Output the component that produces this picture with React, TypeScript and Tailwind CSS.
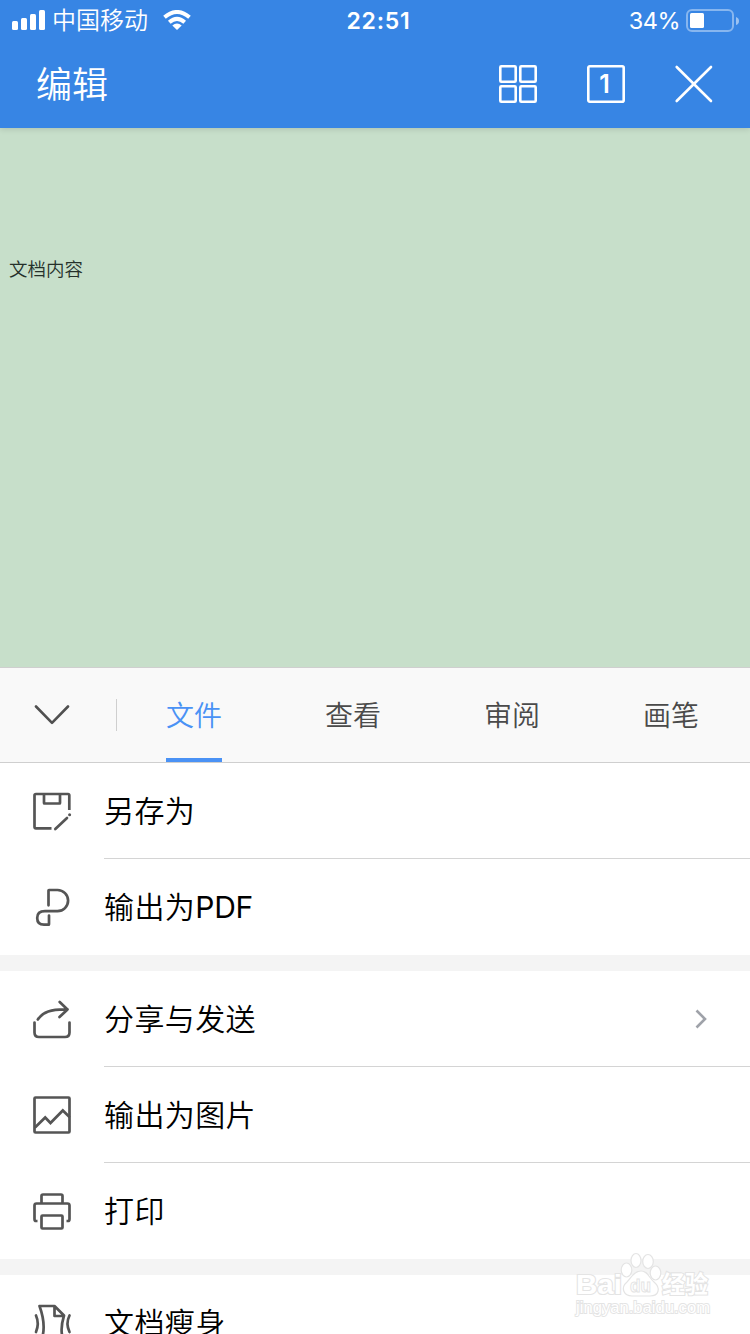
import type { ReactNode } from "react";

const cjk = "font-['Inter','Noto_Sans_CJK_SC',sans-serif]";

function Icon({ children }: { children: ReactNode }) {
  return (
    <svg
      width="40"
      height="40"
      viewBox="0 0 40 40"
      fill="none"
      stroke="#555"
      strokeWidth="2.7"
      strokeLinecap="round"
      strokeLinejoin="round"
      className="shrink-0"
    >
      {children}
    </svg>
  );
}

const SaveAs = () => (
  <Icon>
    <path d="M37.300 19V4.300Q37.300 3 36 3H4Q2.500 3 2.500 4.500V35.700Q2.500 37.300 4 37.300H19.500M12 3V12Q12 12.500 12.500 12.500H27.500Q28 12.500 28 12V3" strokeLinecap="butt" />
    <path d="M23.300 38L35 27" />
    <path d="M37.600 23.700V23.700" strokeWidth="3" />
  </Icon>
);

const Pdf = () => (
  <Icon>
    <path d="M16.500 18.300V3.500Q16.500 3 17 3H25.500A10.300 10.300 0 0 1 25.500 24.200H13C7.500 24.200 5.200 26.500 5.200 31C5.200 35.500 7.500 37.700 12 37.700H16.500Q17 37.700 17 37.200V28.500" />
  </Icon>
);

const Share = () => (
  <Icon>
    <path d="M2.500 23.500V33.500Q2.500 38 7 38H33Q37.500 38 37.500 33.500V23.500" />
    <path d="M5.800 20.500C11 13 18.500 10 35.500 10.400M27.700 3L35.500 10.400L27.500 18" />
  </Icon>
);

const Picture = () => (
  <Icon>
    <rect x="2.500" y="2.500" width="35" height="35" rx="1" />
    <path d="M3.500 32L13.200 22.500L18.500 28L30.800 15.500L37 21.500" strokeLinejoin="miter" />
  </Icon>
);

const Print = () => (
  <Icon>
    <path d="M9.500 12V5Q9.500 3.500 11 3.500H29Q30.500 3.500 30.500 5V12" strokeLinecap="butt" />
    <path d="M5.500 30H4Q2.500 30 2.500 28V14.500Q2.500 12.500 4.500 12.500H35.500Q37.500 12.500 37.500 14.500V28Q37.500 30 36 30H34.500" strokeLinecap="butt" />
    <rect x="9.500" y="24.500" width="21" height="13" rx="1" />
  </Icon>
);

const Slim = () => (
  <Icon>
    <path d="M9 38C13.500 27 11.500 14 7.500 3H22.500L32 12.500C28.500 24 28.500 31 32 38M22.500 3V13H32" />
    <path d="M4 12.500Q7.500 20.500 4 29M37.500 12.500Q33.500 20.500 37.500 29" />
  </Icon>
);

function Row({ icon, label, line, arrow }: { icon: ReactNode; label: ReactNode; line?: boolean; arrow?: boolean }) {
  return (
    <div className="flex h-24 shrink-0 items-stretch pl-8">
      <div className="flex w-[72px] items-center">{icon}</div>
      <div className={`flex flex-1 items-center justify-between pr-[42px] ${line ? "border-b border-[#d4d4d4]" : ""}`}>
        <span className="whitespace-nowrap text-[30px] leading-[44px] tracking-[0.400px] text-black">{label}</span>
        {arrow && (
          <svg width="14" height="20" viewBox="0 0 14 20" fill="none" stroke="#9fa2a9" strokeWidth="2.600">
            <path d="M2.500 1.500L11 10L2.500 18.500" />
          </svg>
        )}
      </div>
    </div>
  );
}

function Header() {
  return (
    <header className="relative z-10 flex h-32 shrink-0 flex-col bg-[#3785e4] text-white shadow-[0_1px_6px_rgba(0,0,0,0.14)]">
      <div className="flex h-10 items-center pl-3 pr-[11px]">
        <div className="flex flex-1 items-center">
          <svg width="33" height="20" viewBox="0 0 33 20" fill="white">
            <rect x="0" y="11" width="6" height="9" rx="1.500" />
            <rect x="9" y="8" width="6" height="12" rx="1.500" />
            <rect x="18" y="4" width="6" height="16" rx="1.500" />
            <rect x="27" y="0" width="6" height="20" rx="1.500" />
          </svg>
          <span className="ml-[7px] mt-[2px] whitespace-nowrap text-2xl leading-[38px]">中国移动</span>
          <svg width="28" height="20" viewBox="0 0 28 20" fill="none" stroke="white" strokeWidth="4" className="ml-[15px]">
            <path d="M1.500 7.300Q14-3.300 26.500 7.300M6.300 12.200Q14 5.500 21.700 12.200" />
            <path d="M14 20L9.300 15.500Q14 11.500 18.700 15.500Z" fill="white" stroke="none" />
          </svg>
        </div>
        <span className="ml-[6px] mt-[2px] text-[23px] font-semibold leading-[38px] tracking-[0.800px]">22:51</span>
        <div className="flex flex-1 items-center justify-end">
          <span className="mr-[6px] mt-[2px] text-[23.500px] font-normal leading-[38px] tracking-[-0.500px]">34%</span>
          <svg width="53" height="24" viewBox="0 0 53 24" fill="none" className="mt-[2px]">
            <rect x="1" y="1" width="46" height="21" rx="5" stroke="white" strokeOpacity="0.400" strokeWidth="2" />
            <rect x="4" y="4" width="14" height="15" rx="1.500" fill="white" />
            <path d="M50 8Q53 9 53 12Q53 15 50 16Z" fill="white" fillOpacity="0.500" />
          </svg>
        </div>
      </div>
      <div className="flex h-[88px] items-center pl-9 pr-9">
        <h1 className="flex-1 pt-px text-4xl leading-[52px]">编辑</h1>
        <div className="flex items-center gap-[48px]">
          <svg width="40" height="40" viewBox="0 0 40 40" fill="none" stroke="white" strokeWidth="2.600">
            <rect x="2.300" y="2.300" width="15.400" height="15.400" rx="1" />
            <rect x="22.300" y="2.300" width="15.400" height="15.400" rx="1" />
            <rect x="2.300" y="22.300" width="15.400" height="15.400" rx="1" />
            <rect x="22.300" y="22.300" width="15.400" height="15.400" rx="1" />
          </svg>
          <div className="relative flex size-10 items-center justify-center">
            <svg width="40" height="40" viewBox="0 0 40 40" fill="none" stroke="white" strokeWidth="2.600" className="absolute inset-0">
              <rect x="2.300" y="2.300" width="35.400" height="35.400" rx="1.500" />
            </svg>
            <span className="pr-[3px] text-[25px] font-semibold leading-none">1</span>
          </div>
          <svg width="40" height="40" viewBox="0 0 40 40" fill="none" stroke="white" strokeWidth="2.600" strokeLinecap="round">
            <path d="M2.700 3L37 37M37 3L2.700 37" />
          </svg>
        </div>
      </div>
    </header>
  );
}

function Tabs() {
  return (
    <nav className="flex h-24 shrink-0 items-center border-y border-[#cfcfcf] bg-[#f9f9f9] text-[28px] text-[#4a4a4a]">
      <svg width="36" height="20" viewBox="0 0 36 20" fill="none" stroke="#505050" strokeWidth="2.600" strokeLinecap="round" strokeLinejoin="round" className="ml-[34px]">
        <path d="M2 1.500L18 17.800L34 1.500" />
      </svg>
      <div className="ml-[46px] mr-[49px] h-8 w-px bg-[#cfcfcf]" />
      <div className="flex h-full flex-1 justify-between pr-[51px] leading-[97px]">
        <div className="h-full border-b-4 border-[#4a92f5] text-[#4a92f5]">文件</div>
        <div>查看</div>
        <div>审阅</div>
        <div>画笔</div>
      </div>
    </nav>
  );
}

function Watermark() {
  return (
    <svg width="142" height="74" viewBox="0 0 142 74" className="absolute left-[572px] top-[1250px]" fill="white" stroke="#e4e4e4" strokeWidth="1.200">
      <g fontFamily="Liberation Sans, Noto Sans CJK SC, sans-serif" fontWeight="bold" style={{ paintOrder: "stroke" }} strokeWidth="2.200">
        <text x="4" y="44" fontSize="28" textLength="46" lengthAdjust="spacingAndGlyphs">Bai</text>
        <text x="90" y="43" fontSize="24" textLength="46" lengthAdjust="spacingAndGlyphs">经验</text>
        <text x="4" y="63" fontSize="16" textLength="134" lengthAdjust="spacingAndGlyphs" fontWeight="normal" strokeWidth="1.800">jingyan.baidu.com</text>
      </g>
      <ellipse cx="54.500" cy="20" rx="5.300" ry="7" />
      <ellipse cx="64" cy="10.500" rx="5" ry="7" />
      <ellipse cx="76" cy="11.500" rx="5.300" ry="7" />
      <ellipse cx="83.500" cy="23" rx="5.300" ry="7" />
      <path d="M69 21C62 21 59 28 55 32C48 38 52 46 60 46H78C87 46 89 38 82 32C77 28 76 21 69 21Z" />
      <text x="58" y="42" fontSize="19" fontWeight="bold" fontFamily="Liberation Sans, sans-serif" textLength="21" lengthAdjust="spacingAndGlyphs" strokeWidth="1">du</text>
    </svg>
  );
}

export default function App() {
  return (
    <div className={`relative flex h-[1334px] w-[750px] flex-col overflow-hidden bg-white font-[350] ${cjk}`}>
      <Header />
      <main className="h-[539px] shrink-0 bg-[#c7dfca] pl-[9px] pt-[127px]">
        <p className="text-[18.500px] leading-7 text-[#25302a]">文档内容</p>
      </main>
      <Tabs />
      <Row icon={<SaveAs />} label="另存为" line />
      <Row icon={<Pdf />} label={<>输出为<span className="font-normal tracking-[-0.200px]">PDF</span></>} />
      <div className="h-4 shrink-0 bg-[#f4f4f4]" />
      <Row icon={<Share />} label="分享与发送" line arrow />
      <Row icon={<Picture />} label="输出为图片" line />
      <Row icon={<Print />} label="打印" />
      <div className="h-4 shrink-0 bg-[#f4f4f4]" />
      <Row icon={<Slim />} label="文档瘦身" />
      <Watermark />
    </div>
  );
}
